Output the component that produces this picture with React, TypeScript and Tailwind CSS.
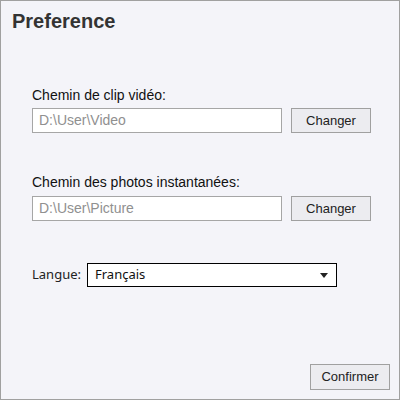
import React from "react";

export default function App() {
  return (
    <div className="w-[400px] h-[400px] bg-[#f4f4f9] border border-[#a0a0a0] flex flex-col relative" style={{ fontFamily: '"Liberation Sans", Arial, sans-serif' }}>
      <div className="pl-[11px] pt-[7px] text-[20px] font-bold text-[#333] leading-[26px]">Preference</div>
      <div className="flex flex-col pl-[31px] pt-[53px]">
        <div className="text-[14px] text-[#111] leading-[16px]">Chemin de clip vidéo:</div>
        <div className="flex mt-[5px] gap-[9px]">
          <div className="w-[250px] h-[25px] bg-white border border-[#a6a6a6] text-[14px] text-[#909090] leading-[23px] pl-[6px]">D:\User\Video</div>
          <button className="w-[80px] h-[25px] bg-[#ececf0] border border-[#a0a0a0] text-[13px] text-[#222]">Changer</button>
        </div>
        <div className="text-[14px] text-[#111] leading-[16px] mt-[41px]">Chemin des photos instantanées:</div>
        <div className="flex mt-[6px] gap-[9px]">
          <div className="w-[250px] h-[25px] bg-white border border-[#a6a6a6] text-[14px] text-[#909090] leading-[23px] pl-[6px]">D:\User\Picture</div>
          <button className="w-[80px] h-[25px] bg-[#ececf0] border border-[#a0a0a0] text-[13px] text-[#222]">Changer</button>
        </div>
        <div className="flex items-center mt-[42px] gap-[6px]" style={{ fontFamily: '"Noto Sans", "Open Sans", sans-serif' }}>
          <span className="text-[13px] text-[#222]">Langue:</span>
          <div className="w-[250px] h-[24px] bg-white border border-black flex items-center justify-between pl-[7px] pr-[8px]">
            <span className="text-[13px] text-[#111]">Français</span>
            <svg width="8" height="5" viewBox="0 0 8 5"><path d="M0 0H8L4 5Z" fill="#222" /></svg>
          </div>
        </div>
      </div>
      <div className="flex-1" />
      <div className="flex justify-end pr-[9px] pb-[9px]">
        <button className="w-[80px] h-[26px] bg-[#ececf0] border border-[#a0a0a0] text-[13px] text-[#222]">Confirmer</button>
      </div>
    </div>
  );
}
